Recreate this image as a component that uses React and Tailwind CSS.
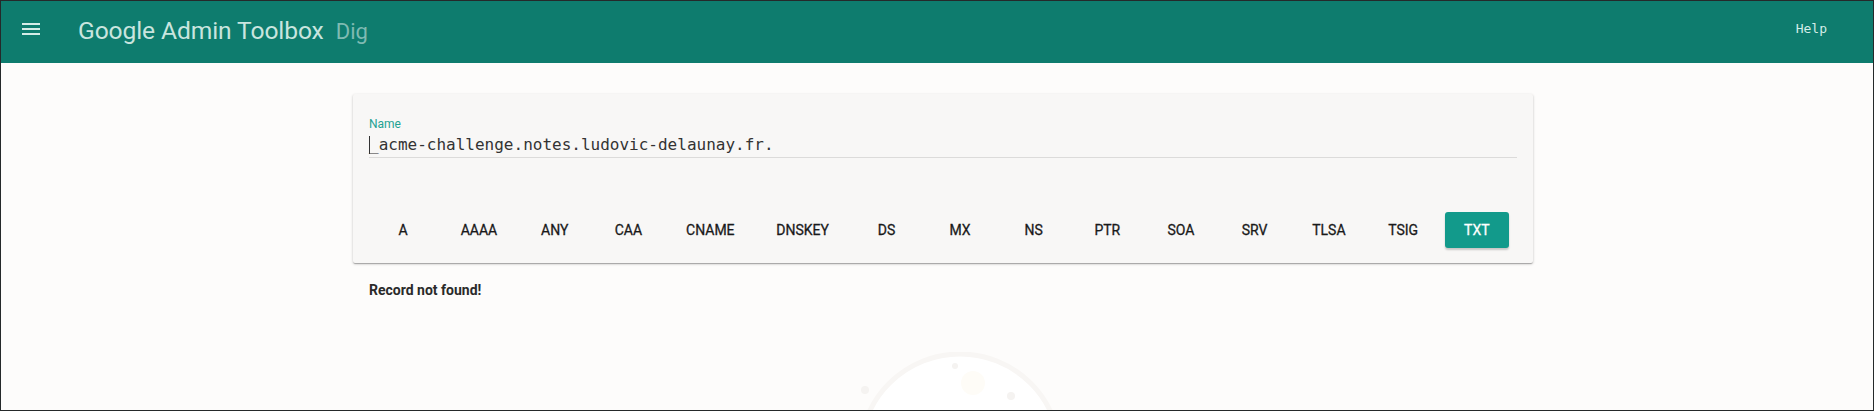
import React from "react";

const TYPES = ["A","AAAA","ANY","CAA","CNAME","DNSKEY","DS","MX","NS","PTR","SOA","SRV","TLSA","TSIG","TXT"];

export default function App() {
  return (
    <div className="h-[411px] w-full overflow-hidden border border-[#25292a] bg-[#fdfcfb] flex flex-col">
      <header className="h-[62px] shrink-0 bg-[#0e7c6e] flex items-center">
        <svg className="ml-[18px] w-6 h-6 mt-[-6px]" viewBox="0 0 24 24" fill="#d4ece7">
          <path d="M3 18h18v-2H3v2zm0-5h18v-2H3v2zm0-7v2h18V6H3z" />
        </svg>
        <div className="ml-[35px] flex items-baseline mt-[-1px] font-['Roboto',sans-serif]">
          <span className="text-[24.6px] text-[#c9e5df] tracking-[-0.1px]">Google Admin Toolbox</span>
          <span className="ml-[12px] text-[22px] text-[#7fbab2]">Dig</span>
        </div>
        <div className="ml-auto mr-[46px] mt-[-6px] text-[13px] text-[#d4ece7] font-['DejaVu_Sans_Mono',monospace]">Help</div>
      </header>

      <main className="flex flex-col w-[1180px] ml-[352px] font-['Roboto',sans-serif]">
        <section className="mt-[31px] bg-[#f8f7f6] rounded-[2px] shadow-[0_1px_3px_rgba(0,0,0,0.2),0_1px_1px_rgba(0,0,0,0.14),0_2px_1px_-1px_rgba(0,0,0,0.12)] px-4 pt-6 pb-[15px]">
          <div className="text-[12px] leading-[12px] text-[#1ea293]">Name</div>
          <div className="mt-[3px] h-6 flex items-center border-b border-[#dcdbda] box-content">
            <span className="inline-block w-px h-[18px] bg-[#333] -mr-px"></span>
            <span className="text-[16px] leading-6 text-[#333] font-['DejaVu_Sans_Mono',monospace]">_acme-challenge.notes.ludovic-delaunay.fr.</span>
          </div>
          <div className="mt-[54px] ml-[2px] mr-[8px] flex justify-between">
            {TYPES.map((t) =>
              t === "TXT" ? (
                <button key={t} className="h-9 min-w-16 px-4 rounded-[3px] bg-[#129a8b] text-white text-[14px] font-normal [-webkit-text-stroke:0.3px_#ffffff] shadow-[0_2px_2px_rgba(0,0,0,0.2)]">{t}</button>
              ) : (
                <button key={t} className="h-9 min-w-16 px-4 rounded-[3px] text-[#1a1a1a] text-[14px] font-normal [-webkit-text-stroke:0.3px_#1a1a1a]">{t}</button>
              )
            )}
          </div>
        </section>
        <div className="mt-[17px] ml-4 text-[14px] leading-5 font-bold text-[#2a2a2a]">Record not found!</div>
      </main>

      <svg className="mt-auto block shrink-0" width="1872" height="58" viewBox="0 0 1872 58">
        <circle cx="959" cy="102" r="100" fill="#ffffff" stroke="#f8f6f4" strokeWidth="5" />
        <circle cx="954" cy="14" r="3" fill="#f5f3f1" />
        <circle cx="864" cy="38" r="4" fill="#f5f3f1" />
        <circle cx="1010" cy="44" r="4" fill="#f5f3f1" />
        <circle cx="972" cy="31" r="12" fill="#fefcf7" />
      </svg>
    </div>
  );
}
